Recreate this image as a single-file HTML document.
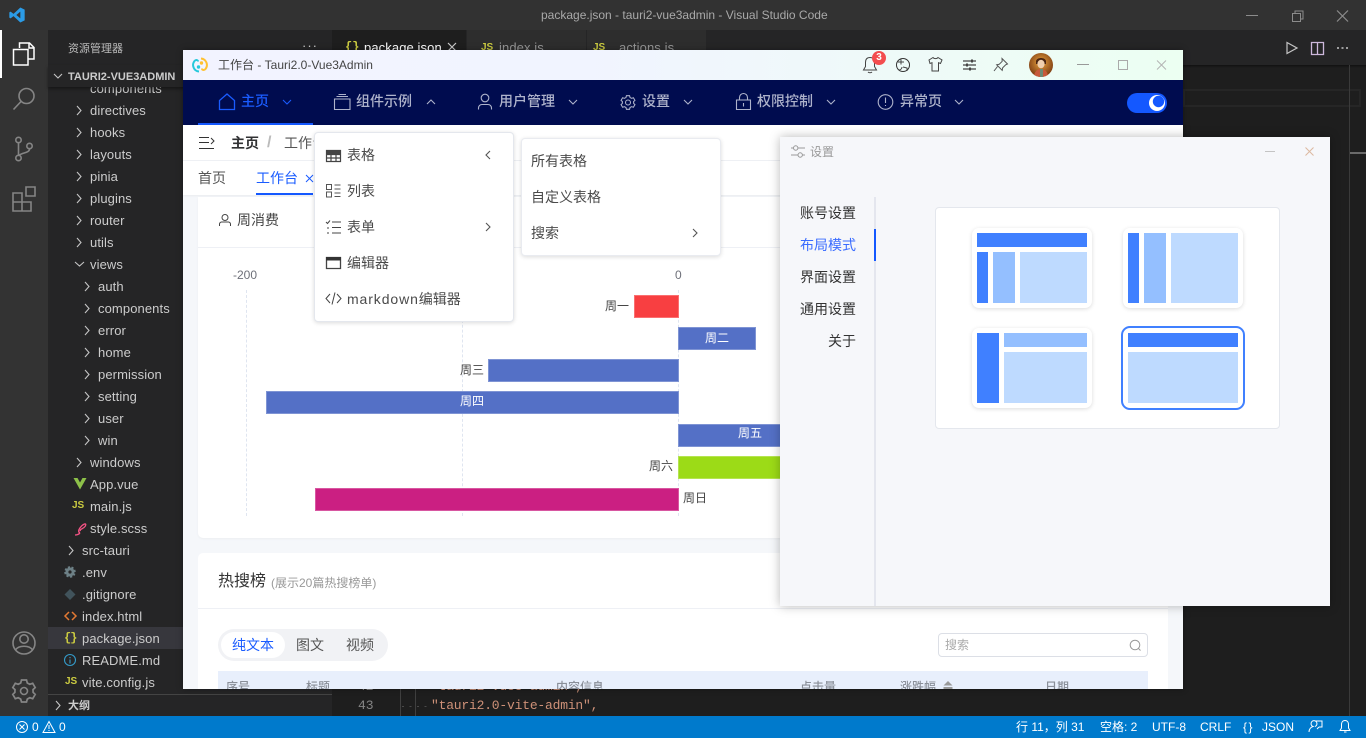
<!DOCTYPE html>
<html lang="zh"><head><meta charset="utf-8"><title>package.json - tauri2-vue3admin - Visual Studio Code</title>
<style>
*{box-sizing:border-box}
html,body{margin:0;padding:0;width:1366px;height:738px;overflow:hidden;background:#1e1e1e;font-family:"Liberation Sans","Noto Sans CJK SC",sans-serif}
.a{position:absolute}
.t{position:absolute;white-space:nowrap;line-height:20px;height:20px}
svg{position:absolute;overflow:visible;fill:none}
.f{font-size:13px;color:#ccc;letter-spacing:.1px;margin-top:1px}
.nav{font-size:14px;color:#aeb3cb;font-weight:500}
.m{font-size:14px;color:#4a4a4a}
.lb{font-size:12px;color:#444}
.w{font-size:12px;color:#fff;font-weight:400;text-align:center}
.s{font-size:14px;color:#333;text-align:right;left:780px;width:76px}
.st{font-size:12px;color:#fff}
.js{font:bold 10px/20px "Liberation Sans",sans-serif;color:#cbcb41;letter-spacing:0}
.bar{position:absolute;height:23px;border:1px solid rgba(255,255,255,.25)}
.th{font-size:12px;color:#8a8f99;font-weight:500}
.lay{position:absolute;width:120px;height:80px;background:#fff;border-radius:7px;box-shadow:0 1px 4px rgba(0,0,0,.14)}
.d{background:#4080ff;position:absolute}.c{background:#94bfff;position:absolute}.e{background:#bedaff;position:absolute}
.dash{position:absolute;top:290px;height:226px;width:0;border-left:1px dashed #dfe5f0}
</style></head><body>
<svg width="0" height="0" style="position:absolute"><defs>
<symbol id="cr" viewBox="0 0 10 10"><polyline points="3,1 7,5 3,9" fill="none" stroke="currentColor" stroke-width="1.1"/></symbol>
<symbol id="cd" viewBox="0 0 10 10"><polyline points="1,3 5,7 9,3" fill="none" stroke="currentColor" stroke-width="1.1"/></symbol>
<symbol id="cu" viewBox="0 0 10 10"><polyline points="1,7 5,3 9,7" fill="none" stroke="currentColor" stroke-width="1.1"/></symbol>
<symbol id="cl" viewBox="0 0 10 10"><polyline points="7,1 3,5 7,9" fill="none" stroke="currentColor" stroke-width="1.1"/></symbol>
</defs></svg>

<!-- VS Code chrome -->
<div class="a" style="left:0;top:0;width:1366px;height:30px;background:#323232"></div>
<svg style="left:9px;top:7px" width="16" height="16" viewBox="0 0 24 24"><path fill="#2b9be6" d="M17 .8 23.5 4v16L17 23.200 6.800 13.600 2.400 17 .5 16V8l1.900-1 4.400 3.400zM17 7 11 12l6 5z"/></svg>
<div class="t" style="left:541px;top:5px;font-size:12px;color:#a9a9a9;width:285px">package.json - tauri2-vue3admin - Visual Studio Code</div>
<svg style="left:1240px;top:8px" width="120" height="15" stroke="#8c8c8c"><path d="M6 7.500h12" stroke-width="1"/><path d="M52.500 5.500h8v8h-8zM55 5.500V3h8v8h-2.500"/><path d="M97 2.500l11 11M108 2.500l-11 11" stroke-width="1.200"/></svg>

<div class="a" style="left:0;top:30px;width:48px;height:686px;background:#333"></div>
<div class="a" style="left:0;top:30px;width:2px;height:48px;background:#fff"></div>
<svg style="left:0;top:30px" width="48" height="686"><g stroke="#fff" stroke-width="1.500"><path d="M19.500 18V13h10l4.500 4.500V29h-6M29 13v5h5"/><path d="M13.500 19.500h14.500V35H13.500z"/></g>
<g stroke="#858585" stroke-width="1.600"><circle cx="26.500" cy="66" r="7.500"/><path d="M21 71.500l-7.500 8"/>
<circle cx="18.500" cy="110" r="2.700"/><circle cx="18.500" cy="128" r="2.700"/><circle cx="29.500" cy="116" r="2.700"/><path d="M18.500 113v12M29.500 119c0 4-7 3.500-10 6"/>
<path d="M13 163h9v9h-9zM13 172h9v9h-9zM22 172h9v9h-9zM26 157h9v9h-9z"/>
<circle cx="24" cy="613" r="11"/><circle cx="24" cy="609" r="4.200"/><path d="M15.500 620c3-5 14-5 17 0"/>
<circle cx="24" cy="661" r="3.500"/><path stroke-width="1.700" d="M21.500 650h5l.8 3 2.500 1.300 2.900-1 2.500 4.300-2.200 2 .1 2.800 2.100 2-2.500 4.300-2.900-1-2.500 1.400-.8 2.900h-5l-.8-2.900-2.500-1.400-2.900 1-2.500-4.300 2.100-2 .1-2.800-2.200-2 2.500-4.300 2.900 1 2.500-1.300z"/></g></svg>

<div class="a" style="left:48px;top:30px;width:284px;height:686px;background:#252526"></div>
<div class="t" style="left:68px;top:39px;font-size:11px;color:#bbb">资源管理器</div>
<div class="t" style="left:302px;top:36px;font-size:13px;color:#ccc;letter-spacing:1px">···</div>
<div class="a" style="left:48px;top:627px;width:284px;height:22px;background:#37373d"></div>

<div class="t f" style="left:90px;top:78px">components</div>
<div class="t f" style="left:90px;top:100px">directives</div>
<div class="t f" style="left:90px;top:122px">hooks</div>
<div class="t f" style="left:90px;top:144px">layouts</div>
<div class="t f" style="left:90px;top:166px">pinia</div>
<div class="t f" style="left:90px;top:188px">plugins</div>
<div class="t f" style="left:90px;top:210px">router</div>
<div class="t f" style="left:90px;top:232px">utils</div>
<div class="t f" style="left:90px;top:254px">views</div>
<div class="t f" style="left:98px;top:276px">auth</div>
<div class="t f" style="left:98px;top:298px">components</div>
<div class="t f" style="left:98px;top:320px">error</div>
<div class="t f" style="left:98px;top:342px">home</div>
<div class="t f" style="left:98px;top:364px">permission</div>
<div class="t f" style="left:98px;top:386px">setting</div>
<div class="t f" style="left:98px;top:408px">user</div>
<div class="t f" style="left:98px;top:430px">win</div>
<div class="t f" style="left:90px;top:452px">windows</div>
<div class="t f" style="left:90px;top:474px">App.vue</div>
<div class="t f" style="left:90px;top:496px">main.js</div>
<div class="t f" style="left:90px;top:518px">style.scss</div>
<div class="t f" style="left:82px;top:540px">src-tauri</div>
<div class="t f" style="left:82px;top:562px">.env</div>
<div class="t f" style="left:82px;top:584px">.gitignore</div>
<div class="t f" style="left:82px;top:606px">index.html</div>
<div class="t f" style="left:82px;top:628px">package.json</div>
<div class="t f" style="left:82px;top:650px">README.md</div>
<div class="t f" style="left:82px;top:672px">vite.config.js</div>

<svg style="left:0;top:0" width="332" height="716" stroke="#c5c5c5" stroke-width="1.100">
<path d="M77 106l4 4.500-4 4.500M77 128l4 4.500-4 4.500M77 150l4 4.500-4 4.500M77 172l4 4.500-4 4.500M77 194l4 4.500-4 4.500M77 216l4 4.500-4 4.500M77 238l4 4.500-4 4.500M75 262l4.500 4 4.500-4"/>
<path d="M85 282l4 4.500-4 4.500M85 304l4 4.500-4 4.500M85 326l4 4.500-4 4.500M85 348l4 4.500-4 4.500M85 370l4 4.500-4 4.500M85 392l4 4.500-4 4.500M85 414l4 4.500-4 4.500M85 436l4 4.500-4 4.500M77 458l4 4.500-4 4.500M69 546l4 4.500-4 4.500"/>
<path fill="#8dc149" stroke="none" d="M73.500 478h4l2.500 4.500 2.500-4.500h4l-6.500 11.500z"/>
<path stroke="#f55385" stroke-width="1.300" d="M80 533c-4-2 2-8 4.500-9 2-.7 1.500 2-.5 3.500-2 1.500-4.500 2-3.500 3.500M75 535c2 0 4-1 5-2"/>
<path fill="#6d8086" stroke="#6d8086" stroke-width="2.500" stroke-dasharray="2 1.500" d="M70 567.500a4.500 4.500 0 1 0 .01 0z"/><circle cx="70" cy="572" r="1.600" fill="#252526" stroke="none"/>
<path fill="#41535b" stroke="none" d="M70 589l5.500 5.500-5.500 5.500-5.500-5.500z"/>
<path stroke="#e37933" stroke-width="1.500" d="M69 612l-4 4 4 4M72 612l4 4-4 4"/>
<circle cx="70" cy="660" r="5.500" stroke="#349bc9"/><path stroke="#349bc9" d="M70 657v1.200M70 659.500v4"/>
<path d="M56 701l4 4.500-4 4.500" stroke="#c5c5c5"/>
</svg>
<div class="t" style="left:64px;top:632px;width:12px;font:bold 12px/13px 'Liberation Mono',monospace;color:#cbcb41;height:13px;letter-spacing:-1px">{}</div>
<div class="t js" style="left:72px;top:496px">JS</div>
<div class="t js" style="left:65px;top:672px">JS</div>
<div class="a" style="left:48px;top:65px;width:284px;height:22px;background:#252526;box-shadow:0 2px 3px rgba(0,0,0,.4)"></div>
<div class="t" style="left:68px;top:66px;margin-top:1px;font-size:11px;font-weight:bold;color:#ccc">TAURI2-VUE3ADMIN</div>
<svg style="left:0;top:0" width="70" height="90" stroke="#c5c5c5" stroke-width="1.100"><path d="M54 74l4 4 4-4"/></svg>
<div class="a" style="left:48px;top:694px;width:284px;height:1px;background:#444"></div>
<div class="t" style="left:68px;top:696px;font-size:11px;font-weight:bold;color:#ccc">大纲</div>

<!-- editor -->
<div class="a" style="left:332px;top:30px;width:1034px;height:35px;background:#252526"></div>
<div class="a" style="left:332px;top:30px;width:134px;height:35px;background:#1e1e1e"></div>
<div class="a" style="left:467px;top:30px;width:119px;height:35px;background:#2d2d2d"></div>
<div class="a" style="left:587px;top:30px;width:119px;height:35px;background:#2d2d2d"></div>
<div class="a" style="left:332px;top:65px;width:1034px;height:3px;background:linear-gradient(#111,#1e1e1e)"></div>
<svg style="left:1280px;top:38px" width="70" height="20" stroke="#c5c5c5"><path d="M7 4.500l10 5.500-10 5.500z" stroke-width="1.200"/><path d="M31.500 4.500h12v12h-12zM37.500 4.500v12" stroke-width="1.300" stroke="#cdb8dc"/><path d="M57 10h2M61.500 10h2M66 10h2" stroke-width="1.400"/></svg>
<div class="a" style="left:1183px;top:89px;width:178px;height:18px;border:2px solid #262626"></div>
<div class="a" style="left:1349px;top:65px;width:1px;height:651px;background:#3a3a3a"></div>
<div class="a" style="left:1350px;top:152px;width:16px;height:2px;background:#6a6a6a"></div>
<div class="a" style="left:400px;top:689px;width:1px;height:27px;background:#404040"></div>
<div class="a" style="left:415px;top:689px;width:1px;height:27px;background:#404040"></div>
<div class="t" style="left:358px;top:677px;font:13px/20px 'Liberation Mono',monospace;color:#858585">42</div>
<div class="t" style="left:358px;top:696px;font:13px/20px 'Liberation Mono',monospace;color:#858585">43</div>
<div class="t" style="left:431px;top:677px;font:13px/20px 'Liberation Mono',monospace;letter-spacing:-.2px;color:#ce9178">"tauri2-vue3-admin",</div>
<div class="t" style="left:431px;top:696px;font:13px/20px 'Liberation Mono',monospace;letter-spacing:-.2px;color:#ce9178">"tauri2.0-vite-admin",</div>
<svg style="left:401px;top:706px" width="30" height="2" stroke="#4a4a4a"><path d="M1 .500h2M8.500 .500h2M16 .500h2M23.500 .500h2"/></svg>

<!-- tab labels -->
<div class="t" style="left:345px;top:37px;font:bold 12px/20px 'Liberation Mono',monospace;color:#cbcb41">{}</div>
<div class="t f" style="left:364px;top:37px;color:#fff">package.json</div>
<svg style="left:447px;top:42px" width="10" height="10" stroke="#ccc" stroke-width="1.200"><path d="M1 1l8 8M9 1l-8 8"/></svg>
<div class="t js" style="left:481px;top:38px">JS</div><div class="t f" style="left:499px;top:37px;color:#969696">index.js</div>
<div class="t js" style="left:593px;top:38px">JS</div><div class="t f" style="left:619px;top:37px;color:#969696">actions.js</div>

<!-- status bar -->
<div class="a" style="left:0;top:716px;width:1366px;height:22px;background:#007acc"></div>
<svg style="left:0;top:716px" width="1366" height="22" stroke="#fff"><circle cx="22" cy="11" r="5.500"/><path d="M19.500 8.500l5 5M24.500 8.500l-5 5"/><path d="M49 5.500l6 11H43zM49 9v4M49 14v1"/>
<path d="M1309 16c0-3 2-5 4-5.500a3 3 0 1 1 2 0M1315 5h7v6h-3M1317 13l2-2" /><path d="M1345 4.500c-2.500 0-3.500 2-3.500 4v3.500l-1.500 2.500h10l-1.500-2.500V8.500c0-2-1-4-3.500-4zM1344 16h2.500"/></svg>
<div class="t st" style="left:32px;top:717px">0</div>
<div class="t st" style="left:59px;top:717px">0</div>
<div class="t st" style="left:1016px;top:717px;font-size:12px">行 11，列 31</div>
<div class="t st" style="left:1100px;top:717px">空格: 2</div>
<div class="t st" style="left:1152px;top:717px">UTF-8</div>
<div class="t st" style="left:1200px;top:717px">CRLF</div>
<div class="t st" style="left:1243px;top:717px;letter-spacing:1.500px">{}</div>
<div class="t st" style="left:1262px;top:717px">JSON</div>

<!-- Tauri window -->
<div class="a" style="left:183px;top:50px;width:1000px;height:639px;overflow:hidden;background:#f5f7fa;box-shadow:0 0 6px rgba(0,0,0,.35)">
<div class="a" style="left:-183px;top:-50px;width:1366px;height:738px">
<div class="a" style="left:183px;top:50px;width:1000px;height:30px;background:linear-gradient(90deg,#f2f3ff 0,#f1f4ff 40%,#ecfff2 100%)"></div>
<svg style="left:192px;top:57px" width="16" height="16" viewBox="0 0 16 16"><path d="M9 1.500a6.500 6.500 0 0 1 4.500 10.500c-1.500 1.700-3.500 1-3.500-.5" stroke="#ffc131" stroke-width="2"/><path d="M7 14.500A6.500 6.500 0 0 1 2.500 4C4 2.300 6 3 6 4.500" stroke="#24c8db" stroke-width="2"/><circle cx="9.500" cy="6" r="1.700" fill="#ffc131"/><circle cx="6.500" cy="10" r="1.700" fill="#24c8db"/></svg>
<div class="t" style="left:218px;top:55px;font-size:12px;color:#444">工作台 - Tauri2.0-Vue3Admin</div>

<svg style="left:860px;top:53px" width="320" height="24" stroke="#444" stroke-width="1">
<path d="M10 4.500c-3 0-4.500 2-4.500 5v4L3.500 17h13l-2-3.500v-4c0-3-1.500-5-4.500-5zM8 19c1 1 3 1 4 0"/>
<circle cx="43" cy="12" r="6.500" stroke="#333"/><path d="M38 9h6M41 6.500v5M43 14l4 1v3M39 17c2 0 3-2 3-3"/>
<path d="M69 7l4-2.500c1 1.500 4 1.500 5 0l4 2.500-1.500 3.500-2-.8V18h-6.500V9.700l-2 .8z"/>
<path stroke-width="1.300" d="M103 8h13M103 12h13M103 16h13"/><path stroke-width="2" d="M112 6.500v3M107 10.500v3M110 14.500v3"/>
<path stroke="#555" d="M142 5.500l5.500 5.500-1.800.8-3 3-.5 2.500-5.500-5.500 2.500-.5 3-3zM137.500 13.500l-3.500 4.500"/>
</svg>
<div class="a" style="left:872px;top:51px;width:14px;height:14px;border-radius:50%;background:#f34d4f;color:#fff;font-size:10px;line-height:14px;text-align:center;font-weight:bold">3</div>
<svg style="left:1029px;top:53px" width="24" height="24" viewBox="0 0 24 24"><defs><radialGradient id="av" cx=".5" cy=".4" r=".6"><stop offset="0" stop-color="#e8a23e"/><stop offset="1" stop-color="#7a3a12"/></radialGradient><clipPath id="ac"><circle cx="12" cy="12" r="12"/></clipPath></defs><g clip-path="url(#ac)"><rect width="24" height="24" fill="url(#av)"/><path d="M7 8c1-4 9-4 10 0v3H7z" fill="#4a2410"/><ellipse cx="12" cy="11" rx="3.600" ry="4.300" fill="#f0cfae"/><path d="M5 24c0-5 3-8 7-8s7 3 7 8z" fill="#c7583a"/><path d="M11 16h3v8h-3z" fill="#6c8a75"/></g></svg>
<svg style="left:1070px;top:55px" width="105" height="20" stroke="#999"><path d="M7 9.500h12"/><path d="M48.500 5.500h9v9h-9z" stroke="#aaa"/><path d="M87 5.500l9 9M96 5.500l-9 9" stroke="#b4b4b4"/></svg>

<!-- nav -->
<div class="a" style="left:183px;top:80px;width:1000px;height:45px;background:#000c4f"></div>
<div class="a" style="left:198px;top:123px;width:115px;height:2px;background:#1458ff"></div>
<svg style="left:183px;top:80px" width="800" height="45" stroke="#aeb3cb" stroke-width="1.100">
<path stroke="#1a5cff" stroke-width="1.300" d="M36.500 29.500V20.500l7.500-6.500 7.500 6.500v9z"/>
<path d="M151.500 19h15.500v10.500h-15.500zM153.500 16.500h11.500M155.500 14.500h7.500"/>
<circle cx="302" cy="18" r="3.800"/><path d="M295.500 29.500v-1.500c0-2 1.500-3.500 3.500-3.500h6c2 0 3.500 1.500 3.500 3.500v1.500"/>
<g transform="translate(445 22.500) scale(.62) translate(-24 -661)" stroke-width="1.700"><circle cx="24" cy="661" r="4"/><path d="M21.500 650h5l.8 3 2.500 1.300 2.900-1 2.500 4.300-2.200 2 .1 2.800 2.100 2-2.500 4.300-2.900-1-2.500 1.400-.8 2.900h-5l-.8-2.900-2.500-1.400-2.900 1-2.500-4.300 2.100-2 .1-2.800-2.200-2 2.500-4.300 2.900 1 2.500-1.300z"/></g>
<path d="M553.500 20h14v9.500h-14zM556.500 20v-2.500a4 4 0 0 1 8 0V20M560.500 23v3.500"/>
<circle cx="702.500" cy="22" r="7.300"/><path d="M702.500 17.500v5.500M702.500 25v1"/>
</svg>
<div class="t nav" style="left:241px;top:91px;color:#1a5cff">主页</div>
<div class="t nav" style="left:356px;top:91px">组件示例</div>
<div class="t nav" style="left:499px;top:91px">用户管理</div>
<div class="t nav" style="left:642px;top:91px">设置</div>
<div class="t nav" style="left:757px;top:91px">权限控制</div>
<div class="t nav" style="left:900px;top:91px">异常页</div>
<svg style="left:282px;top:97px;color:#1a5cff" width="10" height="10"><use href="#cd"/></svg>
<svg style="left:426px;top:97px;color:#aeb3cb" width="10" height="10"><use href="#cu"/></svg>
<svg style="left:568px;top:97px;color:#aeb3cb" width="10" height="10"><use href="#cd"/></svg>
<svg style="left:683px;top:97px;color:#aeb3cb" width="10" height="10"><use href="#cd"/></svg>
<svg style="left:826px;top:97px;color:#aeb3cb" width="10" height="10"><use href="#cd"/></svg>
<svg style="left:954px;top:97px;color:#aeb3cb" width="10" height="10"><use href="#cd"/></svg>
<div class="a" style="left:1127px;top:93px;width:40px;height:20px;border-radius:10px;background:#1458ff"></div>
<svg style="left:1149px;top:95px" width="16" height="16"><circle cx="8" cy="8" r="8" fill="#fff"/><circle cx="9.500" cy="6.500" r="5.700" fill="#1458ff"/></svg>

<!-- breadcrumb -->
<div class="a" style="left:183px;top:125px;width:1000px;height:36px;background:#fff;border-bottom:1px solid #eef0f4"></div>
<svg style="left:198px;top:135px" width="18" height="16" stroke="#333"><path d="M1 2.500h10M1 7.500h10M1 13.500h15M13 3l3 3-3 3"/></svg>
<div class="t" style="left:231px;top:133px;font-size:14px;color:#303133;font-weight:700">主页</div>
<div class="t" style="left:267px;top:133px;font-size:16px;color:#bbb;font-weight:700">/</div>
<div class="t" style="left:284px;top:133px;font-size:14px;color:#555">工作台</div>

<!-- tabs -->
<div class="a" style="left:183px;top:161px;width:1000px;height:34px;background:#fff;box-shadow:0 1px 2px rgba(0,0,0,.05)"></div>
<div class="t" style="left:198px;top:168px;font-size:14px;color:#555">首页</div>
<div class="t" style="left:256px;top:168px;font-size:14px;color:#1a5cff">工作台</div>
<svg style="left:305px;top:174px" width="9" height="9" stroke="#1a5cff"><path d="M1 1l7 7M8 1l-7 7"/></svg>
<div class="a" style="left:256px;top:193px;width:57px;height:2px;background:#1458ff"></div>

<!-- chart card -->
<div class="a" style="left:198px;top:197px;width:970px;height:341px;background:#fff;border-radius:0 0 5px 5px;box-shadow:0 1px 2px rgba(0,0,0,.04)"></div>
<div class="a" style="left:198px;top:247px;width:970px;height:1px;background:#eef0f5"></div>
<svg style="left:218px;top:213px" width="14" height="14" stroke="#444"><circle cx="7" cy="4.500" r="3"/><path d="M1.500 13v-2c0-1 1-2 2-2h7c1 0 2 1 2 2v2"/></svg>
<div class="t" style="left:237px;top:210px;font-size:14px;color:#444">周消费</div>
<div class="t" style="left:233px;top:265px;font-size:12px;color:#6e7079">-200</div>
<div class="t" style="left:675px;top:265px;font-size:12px;color:#6e7079">0</div>
<div class="dash" style="left:246px"></div><div class="dash" style="left:462px"></div><div class="dash" style="left:678px"></div>
<div class="bar" style="left:634px;top:295px;width:45px;background:#f83f41"></div>
<div class="bar" style="left:678px;top:327px;width:78px;background:#5470c6"></div>
<div class="bar" style="left:488px;top:359px;width:191px;background:#5470c6"></div>
<div class="bar" style="left:266px;top:391px;width:413px;background:#5470c6"></div>
<div class="bar" style="left:678px;top:424px;width:144px;background:#5470c6"></div>
<div class="bar" style="left:678px;top:456px;width:144px;background:#9cdb17"></div>
<div class="bar" style="left:315px;top:488px;width:364px;background:#cb1f82"></div>
<div class="t lb" style="left:605px;top:296px">周一</div>
<div class="t w" style="left:678px;top:328px;width:78px">周二</div>
<div class="t lb" style="left:460px;top:360px">周三</div>
<div class="t w" style="left:266px;top:391px;width:412px">周四</div>
<div class="t w" style="left:678px;top:423px;width:144px">周五</div>
<div class="t lb" style="left:649px;top:456px">周六</div>
<div class="t lb" style="left:683px;top:488px">周日</div>

<!-- hot list -->
<div class="a" style="left:198px;top:553px;width:970px;height:150px;background:#fff;border-radius:5px"></div>
<div class="a" style="left:198px;top:608px;width:970px;height:1px;background:#eef0f5"></div>
<div class="t" style="left:218px;top:572px;font-size:16px;color:#333">热搜榜</div>
<div class="t" style="left:271px;top:573px;font-size:12px;color:#999">(展示20篇热搜榜单)</div>
<div class="a" style="left:218px;top:629px;width:170px;height:32px;border-radius:16px;background:#f1f2f5"></div>
<div class="a" style="left:221px;top:632px;width:64px;height:26px;border-radius:13px;background:#fff"></div>
<div class="t" style="left:232px;top:635px;font-size:14px;color:#1a5cff">纯文本</div>
<div class="t" style="left:296px;top:635px;font-size:14px;color:#555">图文</div>
<div class="t" style="left:346px;top:635px;font-size:14px;color:#555">视频</div>
<div class="a" style="left:938px;top:633px;width:210px;height:24px;border:1px solid #dcdfe6;border-radius:4px;background:#fff"></div>
<div class="t" style="left:945px;top:635px;font-size:12px;color:#aaa">搜索</div>
<svg style="left:1129px;top:639px" width="13" height="13" stroke="#999"><circle cx="6" cy="6" r="4.800"/><path d="M9.500 9.500l2 2"/></svg>
<div class="a" style="left:218px;top:671px;width:930px;height:30px;background:#e8effc"></div>
<div class="t th" style="left:226px;top:677px">序号</div>
<div class="t th" style="left:306px;top:677px">标题</div>
<div class="t th" style="left:556px;top:677px">内容信息</div>
<div class="t th" style="left:800px;top:677px">点击量</div>
<div class="t th" style="left:900px;top:677px">涨跌幅</div>
<div class="t th" style="left:1045px;top:677px">日期</div>
<svg style="left:942px;top:680px" width="12" height="9"><path d="M6 1l4.500 4.500h-9z" fill="#999"/><path d="M1.500 7h9v2h-9z" fill="#999"/></svg>

<!-- dropdowns -->
<div class="a" style="left:314px;top:132px;width:200px;height:190px;background:#fff;border:1px solid #e4e7ed;border-radius:4px;box-shadow:0 1px 4px rgba(0,0,0,.14)"></div>
<div class="a" style="left:521px;top:138px;width:200px;height:118px;background:#fff;border:1px solid #e9ebf0;border-radius:4px;box-shadow:0 1px 4px rgba(0,0,0,.14)"></div>
<svg style="left:325px;top:148px" width="18" height="165" stroke="#444"><path stroke-width="1.200" d="M1.500 2.500h14v11h-14zM1.500 6.500h14M1.500 10h14M6 6.500v7M11 6.500v7"/><path fill="#444" stroke="none" d="M1 2h15v4H1z"/>
<path stroke="#555" d="M1.500 36.500h5v5h-5zM1.500 44h5v5h-5zM9.500 37h6M9.500 41h6M9.500 45h6M9.500 48.500h6"/>
<path stroke="#444" d="M1 74l1.500 1.500L5 72.500M2 80h2M2 85h2M7 74h9M7 79.500h9M7 85h9"/>
<path stroke-width="1.300" d="M1.500 109.500h14v11h-14z"/><path fill="#333" stroke="none" d="M1 109h15v3.500H1z"/>
<path d="M5 146l-4 4.500 4 4.500M12 146l4 4.500-4 4.500M10 144.500l-3 12"/></svg>
<div class="t m" style="left:347px;top:145px">表格</div>
<div class="t m" style="left:347px;top:181px">列表</div>
<div class="t m" style="left:347px;top:217px">表单</div>
<div class="t m" style="left:347px;top:253px">编辑器</div>
<div class="t m" style="left:347px;top:289px"><span style="letter-spacing:.9px">markdown</span>编辑器</div>
<svg style="left:483px;top:150px;color:#555" width="10" height="10"><use href="#cl"/></svg>
<svg style="left:483px;top:222px;color:#555" width="10" height="10"><use href="#cr"/></svg>
<div class="t m" style="left:531px;top:151px">所有表格</div>
<div class="t m" style="left:531px;top:187px">自定义表格</div>
<div class="t m" style="left:531px;top:223px">搜索</div>
<svg style="left:690px;top:228px;color:#555" width="10" height="10"><use href="#cr"/></svg>
</div></div>

<!-- Settings window -->
<div class="a" style="left:780px;top:137px;width:550px;height:469px;background:#f6f7fa;box-shadow:0 0 10px rgba(0,0,0,.28)"></div>
<svg style="left:790px;top:144px" width="16" height="15" stroke="#999"><path d="M1 4h2.500M8 4h7M1 11h7M12.500 11H15"/><circle cx="5.700" cy="4" r="2.200"/><circle cx="10.200" cy="11" r="2.200"/></svg>
<div class="t" style="left:810px;top:142px;font-size:12px;color:#999">设置</div>
<svg style="left:1262px;top:144px" width="56" height="14"><path d="M3 7.500h10" stroke="#c4c4c4"/><path d="M43.500 3.500l8 8M51.500 3.500l-8 8" stroke="#dcb9a0"/></svg>
<div class="a" style="left:874px;top:197px;width:2px;height:409px;background:#e4e6ee"></div>
<div class="a" style="left:874px;top:229px;width:2px;height:32px;background:#1458ff"></div>
<div class="t s" style="top:203px">账号设置</div>
<div class="t s" style="top:235px;color:#3a6cff">布局模式</div>
<div class="t s" style="top:267px">界面设置</div>
<div class="t s" style="top:299px">通用设置</div>
<div class="t s" style="top:331px">关于</div>
<div class="a" style="left:935px;top:207px;width:345px;height:222px;background:#fff;border:1px solid #e4e7ed;border-radius:4px"></div>

<div class="lay" style="left:972px;top:228px"></div>
<div class="d" style="left:977px;top:233px;width:110px;height:14px"></div>
<div class="d" style="left:977px;top:252px;width:11px;height:51px"></div>
<div class="c" style="left:993px;top:252px;width:22px;height:51px"></div>
<div class="e" style="left:1020px;top:252px;width:67px;height:51px"></div>

<div class="lay" style="left:1123px;top:228px"></div>
<div class="d" style="left:1128px;top:233px;width:11px;height:70px"></div>
<div class="c" style="left:1144px;top:233px;width:22px;height:70px"></div>
<div class="e" style="left:1171px;top:233px;width:67px;height:70px"></div>

<div class="lay" style="left:972px;top:328px"></div>
<div class="d" style="left:977px;top:333px;width:22px;height:70px"></div>
<div class="c" style="left:1004px;top:333px;width:83px;height:14px"></div>
<div class="e" style="left:1004px;top:352px;width:83px;height:51px"></div>

<div class="a" style="left:1121px;top:326px;width:124px;height:84px;background:#fff;border:2px solid #4080ff;border-radius:9px"></div>
<div class="d" style="left:1128px;top:333px;width:110px;height:14px"></div>
<div class="e" style="left:1128px;top:352px;width:110px;height:51px"></div>
</body></html>
